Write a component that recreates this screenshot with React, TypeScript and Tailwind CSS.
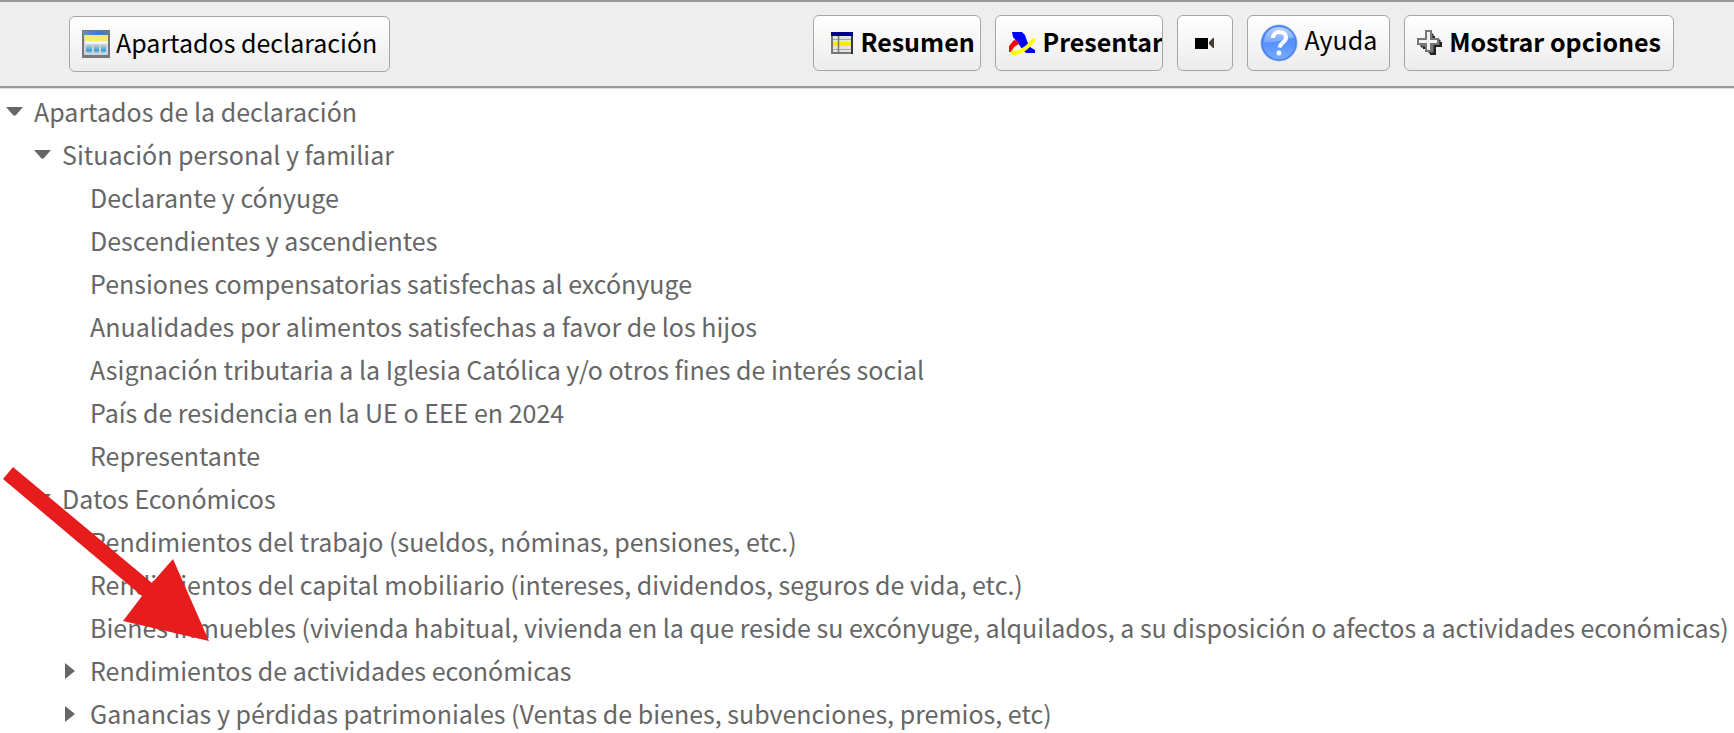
import React, { useState } from 'react';

type TreeNode = {
  label: string;
  open?: boolean;
  children?: TreeNode[];
};

const tree: TreeNode[] = [
  {
    label: 'Apartados de la declaración',
    open: true,
    children: [
      {
        label: 'Situación personal y familiar',
        open: true,
        children: [
          { label: 'Declarante y cónyuge' },
          { label: 'Descendientes y ascendientes' },
          { label: 'Pensiones compensatorias satisfechas al excónyuge' },
          { label: 'Anualidades por alimentos satisfechas a favor de los hijos' },
          { label: 'Asignación tributaria a la Iglesia Católica y/o otros fines de interés social' },
          { label: 'País de residencia en la UE o EEE en 2024' },
          { label: 'Representante' },
        ],
      },
      {
        label: 'Datos Económicos',
        open: true,
        children: [
          { label: 'Rendimientos del trabajo (sueldos, nóminas, pensiones, etc.)' },
          { label: 'Rendimientos del capital mobiliario (intereses, dividendos, seguros de vida, etc.)' },
          {
            label:
              'Bienes inmuebles (vivienda habitual, vivienda en la que reside su excónyuge, alquilados, a su disposición o afectos a actividades económicas)',
          },
          { label: 'Rendimientos de actividades económicas', children: [] },
          { label: 'Ganancias y pérdidas patrimoniales (Ventas de bienes, subvenciones, premios, etc)', children: [] },
        ],
      },
    ],
  },
];

const SectionsIcon = () => (
  <svg width="28" height="28" viewBox="0 0 28 28" className="shrink-0" aria-hidden="true">
    <defs>
      <linearGradient id="sections-top" x1="0" y1="0" x2="1" y2="0">
        <stop offset="0" stopColor="#6b8fb5" />
        <stop offset="0.6" stopColor="#2f7fd0" />
        <stop offset="1" stopColor="#5b7fa5" />
      </linearGradient>
      <linearGradient id="sections-drop" x1="0" y1="0" x2="0" y2="1">
        <stop offset="0" stopColor="#b4cfdc" />
        <stop offset="0.7" stopColor="#35a0d8" />
        <stop offset="1" stopColor="#8fd4f2" />
      </linearGradient>
    </defs>
    <rect width="28" height="28" fill="#75797d" />
    <rect x="2" y="2" width="24" height="23" fill="#ccd2d6" />
    <rect x="1" y="1" width="26" height="4" fill="url(#sections-top)" />
    <rect x="3" y="5" width="23" height="6" fill="#f4ea6c" />
    <rect x="3" y="11" width="23" height="3" fill="#f2f2ee" />
    <rect x="4" y="15" width="6" height="8" rx="2" fill="url(#sections-drop)" />
    <rect x="12" y="15" width="5" height="8" rx="2" fill="url(#sections-drop)" />
    <rect x="19" y="15" width="5" height="8" rx="2" fill="url(#sections-drop)" />
  </svg>
);

const SummaryIcon = () => (
  <svg width="24" height="24" viewBox="0 0 24 24" className="shrink-0" aria-hidden="true">
    <rect x="1" y="1" width="22" height="22" fill="#777" />
    <rect x="3" y="5" width="5" height="16" fill="#e3e3e3" />
    <rect x="9" y="5" width="12" height="16" fill="#e3e3e3" />
    <path d="M3 8.500h18M3 18.500h18" stroke="#aaa" />
    <rect x="3" y="11" width="18" height="4" fill="#f5ee00" />
    <path d="M8.500 5v17" stroke="#777" strokeWidth="1.500" />
    <rect x="21" y="4" width="2" height="19" fill="#333" />
    <rect x="1" y="1" width="22" height="4" fill="#00008b" />
  </svg>
);

const SubmitIcon = () => (
  <svg width="28" height="24" viewBox="0 0 28 24" className="shrink-0" aria-hidden="true">
    <path d="M4 1h10l3 3 2 6 3 6 5 3v3h-9l-4-4-4-6-5-6z" fill="#0000ff" />
    <path d="M1 21v-6l5-6 4 1 1 3-5 3-3 5z" fill="#ff0000" />
    <path d="M3 21C9 24 15 19 19 16S24 9 27 9" fill="none" stroke="#ffff00" strokeWidth="4" />
  </svg>
);

const CameraIcon = () => (
  <svg width="20" height="12" viewBox="0 0 20 12" className="shrink-0" aria-hidden="true">
    <path d="M0 1h13v11H0z" />
    <path d="M19 1v10h-1l-4-4V5l4-4z" fill="#443c35" />
  </svg>
);

const HelpIcon = () => (
  <svg width="38" height="38" viewBox="0 0 38 38" className="shrink-0" aria-hidden="true">
    <defs>
      <linearGradient id="help-fill" x1="0" y1="0" x2="0" y2="1">
        <stop offset="0" stopColor="#5f97f8" />
        <stop offset="0.5" stopColor="#5590ff" />
        <stop offset="1" stopColor="#78adff" />
      </linearGradient>
      <linearGradient id="help-gloss" x1="0" y1="0" x2="0" y2="1">
        <stop offset="0" stopColor="#fff" stopOpacity="0.55" />
        <stop offset="1" stopColor="#fff" stopOpacity="0.2" />
      </linearGradient>
    </defs>
    <circle cx="19" cy="19" r="18.500" fill="#9bbdf7" />
    <circle cx="19" cy="19" r="17" fill="url(#help-fill)" stroke="#4b80ea" strokeWidth="1.500" />
    <path d="M4 18C5 8 11 3 19 3s14 5 15 11C25 13 18 20 4 18z" fill="url(#help-gloss)" />
    <path d="M13 14c0-4 3-6 6.500-6s6.500 2 6.500 5.500c0 5-6 5-6.500 10" fill="none" stroke="#fff" strokeWidth="4" />
    <circle cx="19" cy="29" r="2.500" fill="#fff" />
  </svg>
);

const PlusIcon = () => (
  <svg width="26" height="26" viewBox="0 0 26 26" className="shrink-0" aria-hidden="true">
    <path d="M13 6h5v6h7v5h-6v8h-6v-6H6v-6h7z" fill="#222" />
    <path d="M11 4h5v6h7v5h-6v8h-5v-6H4v-6h7z" fill="#777" stroke="#222" />
    <path d="M9 1h5v8h7v5h-7v7H9v-7H1V9h8z" fill="#f1f1f1" stroke="#777" strokeWidth="2" />
  </svg>
);

const buttonClass =
  'flex shrink-0 items-center overflow-hidden whitespace-nowrap rounded-md border border-[#a6a6a6] bg-linear-to-b from-white to-[#ececec] text-black';

const TreeItem = ({ node }: { node: TreeNode }) => {
  const [open, setOpen] = useState(!!node.open);

  return (
    <li>
      <div className="flex h-[43px] items-center">
        {node.children ? (
          <button
            type="button"
            aria-label={node.label}
            aria-expanded={open}
            onClick={() => setOpen(!open)}
            className="flex w-7 shrink-0 pt-0.5"
          >
            <svg width="18" height="18" viewBox="0 0 18 18" fill="#666" aria-hidden="true">
              {open ? <path d="M0 4h17l-7 8q-1.500 1.500-3 0z" /> : <path d="M3 1l10 8-10 8z" />}
            </svg>
          </button>
        ) : (
          <span className="w-7 shrink-0" />
        )}
        <a href="#" className="whitespace-nowrap">
          {node.label}
        </a>
      </div>
      {open && node.children && (
        <ul className="pl-7">
          {node.children.map((child) => (
            <TreeItem key={child.label} node={child} />
          ))}
        </ul>
      )}
    </li>
  );
};

const App = () => {
  return (
    <div className="flex h-screen flex-col overflow-hidden bg-white font-['Noto_Sans_CJK_SC','Noto_Sans',sans-serif] text-[25px] leading-8">
      <header className="flex h-[88px] shrink-0 items-center justify-between border-y-2 border-[#999] bg-[#eee] pr-[60px] pl-[69px]">
        <button type="button" className={`${buttonClass} h-14 gap-1.5 px-3`}>
          <SectionsIcon />
          <span className="pb-1">Apartados declaración</span>
        </button>

        <div className="flex items-center gap-3.5 pb-0.5">
          <button type="button" className={`${buttonClass} h-14 w-42 gap-1.5 pl-4 font-bold`}>
            <SummaryIcon />
            <span className="pb-1">Resumen</span>
          </button>
          <button type="button" className={`${buttonClass} h-14 w-42 gap-1.5 pl-3 font-bold`}>
            <SubmitIcon />
            <span className="pb-1">Presentar</span>
          </button>
          <button type="button" aria-label="Vídeo" className={`${buttonClass} h-14 w-14 justify-center`}>
            <CameraIcon />
          </button>
          <button type="button" className={`${buttonClass} h-14 gap-1.5 px-3`}>
            <HelpIcon />
            <span className="pb-2">Ayuda</span>
          </button>
          <button type="button" className={`${buttonClass} h-14 gap-1.5 px-3 font-bold`}>
            <PlusIcon />
            <span className="pb-1">Mostrar opciones</span>
          </button>
        </div>
      </header>

      <main className="relative grow overflow-hidden border-t border-[#ddd] text-[#666]">
        <ul className="pl-1.5">
          {tree.map((node) => (
            <TreeItem key={node.label} node={node} />
          ))}
        </ul>

        {/* Arrow pointing at "Bienes inmuebles" */}
        <svg
          width="210"
          height="180"
          viewBox="0 0 210 180"
          className="pointer-events-none absolute top-[376px] left-0"
          aria-hidden="true"
        >
          <path d="M3 14L13 2l139 116 21-24 36 82-86-20 19-25z" fill="#e71d1d" />
        </svg>
      </main>
    </div>
  );
};

export default App;
